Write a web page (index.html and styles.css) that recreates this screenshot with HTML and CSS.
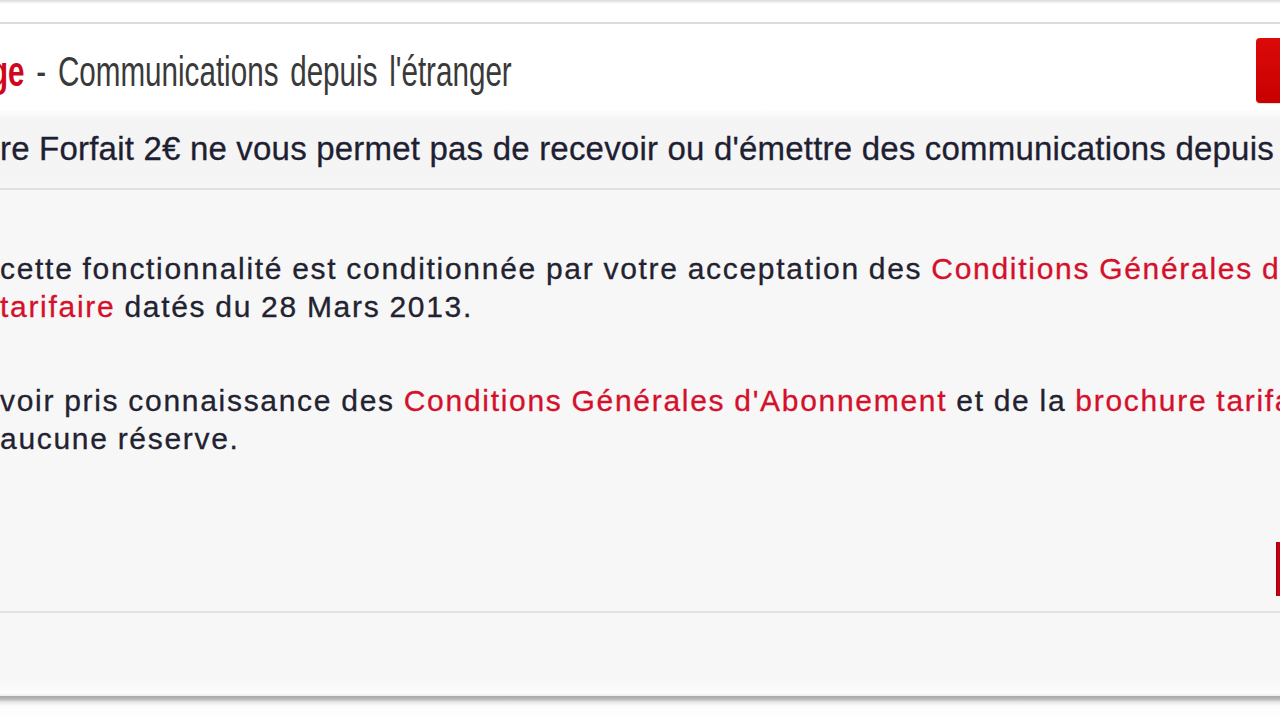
FILE: index.html
```html
<!DOCTYPE html>
<html lang="fr">
<head>
<meta charset="utf-8">
<title>Communications depuis l'étranger</title>
<link rel="stylesheet" href="styles.css">
</head>
<body>
<div class="page">
  <div class="top-strip"></div>
  <section class="panel">
    <header class="panel-head">
      <h1 class="title"><span class="title-accent">ge</span> - Communications depuis l'étranger</h1>
      <span class="head-btn"></span>
    </header>
    <div class="notice">re Forfait 2€ ne vous permet pas de recevoir ou d'émettre des communications depuis l'étranger.</div>
    <div class="content">
      <p class="para">cette fonctionnalité est conditionnée par votre acceptation des <a class="link" href="#">Conditions Générales d'Abonnement</a> et de la brochure<br><a class="link" href="#">tarifaire</a> datés du 28 Mars 2013.</p>
      <p class="para">voir pris connaissance des <a class="link" href="#">Conditions Générales d'Abonnement</a> et de la <a class="link" href="#">brochure tarifaire</a> et les accepter sans<br>aucune réserve.</p>
      <div class="actions"><span class="action-edge"></span></div>
    </div>
    <div class="panel-foot"></div>
  </section>
  <div class="below"></div>
</div>
</body>
</html>
```

FILE: styles.css
```css
html, body {
  margin: 0;
  padding: 0;
  background: #ffffff;
  overflow: hidden;
}

.page {
  width: 1280px;
  height: 720px;
  overflow: hidden;
  display: flex;
  flex-direction: column;
  font-family: "Liberation Sans", Arial, sans-serif;
}

.top-strip {
  height: 22px;
  background: linear-gradient(#d9d9d9 0, #eeeeee 2px, #ffffff 4px, #ffffff 100%);
  flex: none;
}

.panel {
  flex: none;
  display: flex;
  flex-direction: column;
  border-top: 2px solid #dcdcdc;
}

.panel-head {
  height: 86px;
  box-sizing: border-box;
  padding-top: 14px;
  display: flex;
  align-items: flex-start;
  background: #ffffff;
}

.title {
  flex: 1;
  margin: 13px 0 0 -10px;
  font-size: 42px;
  line-height: 42px;
  font-weight: normal;
  color: #3a3a3a;
  white-space: nowrap;
  transform: scaleX(0.705);
  transform-origin: left center;
  word-spacing: 5px;
}

.title-accent {
  color: #d0061c;
  font-weight: bold;
}

.head-btn {
  flex: none;
  width: 24px;
  height: 65px;
  border-radius: 4px 0 0 4px;
  background: linear-gradient(#dc0a0a, #c80000);
  box-shadow: 0 1px 1px rgba(0, 0, 0, 0.15);
}

.notice {
  height: 78px;
  line-height: 78px;
  font-size: 33px;
  color: #1f1f33;
  white-space: nowrap;
  background: linear-gradient(#fdfdfd 0, #f4f4f4 10px, #f5f5f5 100%);
  border-bottom: 2px solid #e1e1e1;
  letter-spacing: 0.2px;
  -webkit-text-stroke: 0.3px #1f1f33;
}

.content {
  background: #f7f7f7;
  padding: 60px 0 15px 0;
  border-bottom: 2px solid #e2e2e2;
}

.para {
  margin: 0 0 56px 0;
  font-size: 30px;
  line-height: 38px;
  color: #222230;
  white-space: nowrap;
  letter-spacing: 1.7px;
  word-spacing: -1px;
  -webkit-text-stroke: 0.3px currentColor;
}

.para:last-of-type {
  margin-bottom: 0;
}

.link {
  color: #d4102b;
  text-decoration: none;
}

.actions {
  margin-top: 84px;
  height: 54px;
  display: flex;
  justify-content: flex-end;
}

.action-edge {
  width: 3px;
  height: 54px;
  background: #c4000f;
  border-left: 1px solid #a0000a;
}

.panel-foot {
  height: 83px;
  background: linear-gradient(#f7f7f7 0, #f7f7f7 66px, #fcfcfc 80px, #ececec 100%);
}

.below {
  flex: 1;
  background: linear-gradient(#a8a8a8 0, #b8b8b8 3px, #e6e6e6 6px, #fcfcfc 10px, #ffffff 100%);
}
```
